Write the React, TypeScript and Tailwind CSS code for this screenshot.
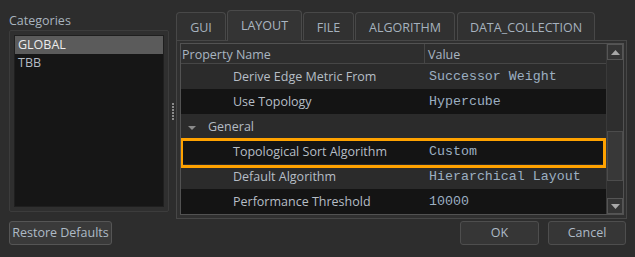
import React from "react";

const rows = [
  { kind: "prop", name: "Derive Edge Metric From", value: "Successor Weight", dark: false },
  { kind: "prop", name: "Use Topology", value: "Hypercube", dark: true },
  { kind: "group", name: "General", value: "", dark: false },
  { kind: "prop", name: "Topological Sort Algorithm", value: "Custom", dark: true, hl: true },
  { kind: "prop", name: "Default Algorithm", value: "Hierarchical Layout", dark: false },
  { kind: "prop", name: "Performance Threshold", value: "10000", dark: true },
];

function Tab({ label, w, selected, ml }: { label: string; w: string; selected?: boolean; ml: string }) {
  if (selected) {
    return (
      <div
        className={`${w} ${ml} h-[31px] -mb-[1px] relative z-10 bg-[#343434] border border-b-0 border-[#4a4a4a] rounded-t-[4px] flex justify-center pt-[6px] text-[#aab6c2]`}
      >
        {label}
      </div>
    );
  }
  return (
    <div
      className={`${w} ${ml} h-[28px] mt-[2px] pt-[3px] bg-[#313131] border border-b-0 border-[#484848] rounded-t-[4px] flex items-center justify-center text-[#a6b2be]`}
    >
      {label}
    </div>
  );
}

export default function App() {
  return (
    <div
      className="w-[635px] h-[257px] bg-[#2d2d2d] flex flex-col overflow-hidden text-[12.5px]"
      style={{ fontFamily: '"Open Sans", "Noto Sans", sans-serif' }}
    >
      <div className="flex h-[212px]">
        {/* Left column */}
        <div className="w-[169px] pl-[9px] pt-[12px] flex flex-col">
          <div className="h-[16px] leading-[16px] pt-[1px] text-[#a9b4bf]">Categories</div>
          <div className="mt-[2px] flex-1 border border-[#3c3c3c] bg-[#2f2f2f] rounded-[2px] p-[4px] flex">
            <div className="flex-1 bg-[#161616] border border-[#1f1f1f] flex flex-col">
              <div className="h-[18px] bg-[#5b5b5b] pl-[3px] pt-[1px] flex items-center text-[#ececec]">GLOBAL</div>
              <div className="h-[18px] pl-[3px] pt-[1px] flex items-center text-[#b4bcc4]">TBB</div>
            </div>
          </div>
        </div>

        {/* Splitter */}
        <div className="w-[7px] pt-[103px] flex flex-col items-center gap-[1px]">
          {[0, 1, 2, 3, 4, 5].map((i) => (
            <div key={i} className="w-[2px] h-[2px] bg-[#8a8a8a]" />
          ))}
        </div>

        {/* Right column */}
        <div className="flex-1 pr-[8px] pt-[10px] flex flex-col">
          <div className="h-[30px] flex items-start">
            <Tab label="GUI" w="w-[50px]" ml="ml-0" />
            <Tab label="LAYOUT" w="w-[75px]" ml="ml-[1px]" selected />
            <Tab label="FILE" w="w-[51px]" ml="ml-[1px]" />
            <Tab label="ALGORITHM" w="w-[100px]" ml="ml-[1px]" />
            <Tab label="DATA_COLLECTION" w="w-[138px]" ml="ml-[2px]" />
          </div>
          <div className="flex-1 border border-[#474747] bg-[#303030] pl-[3px] pt-[2px] pr-[2px] pb-[3px] flex">
            <div className="flex-1 border border-[#525252] flex overflow-hidden">
              {/* table */}
              <div className="w-[425px] flex flex-col overflow-hidden">
                <div className="h-[20px] shrink-0 flex bg-[#2e2e2e] border-b border-[#464646] text-[#a9b5c1]">
                  <div className="w-[244px] pl-[1px] pt-[4px] flex items-center border-r border-[#464646]">Property Name</div>
                  <div className="flex-1 pl-[3px] pt-[4px] flex items-center">Value</div>
                </div>
                {rows.map((r, i) => (
                  <div
                    key={i}
                    className={`h-[25px] shrink-0 flex relative ${r.dark ? "bg-[#141414]" : "bg-[#2b2b2b]"}`}
                  >
                    {r.kind === "group" ? (
                      <div className="flex items-center pt-[2px] text-[#b4bcc4]">
                        <svg width="8" height="4" viewBox="0 0 8 4" className="ml-[7px] mr-[12px] mt-[1px]">
                          <polygon points="0,0 8,0 4,4" fill="#8a8a8a" />
                        </svg>
                        {r.name}
                      </div>
                    ) : (
                      <>
                        <div className="w-[244px] pl-[52px] pt-[2px] flex items-center text-[#b6bec6] whitespace-nowrap">
                          {r.name}
                        </div>
                        <div
                          className="flex-1 pl-[4px] pt-[1px] flex items-center text-[#9cafc2] text-[13.3px] whitespace-nowrap"
                          style={{ fontFamily: '"Liberation Mono", monospace' }}
                        >
                          {r.value}
                        </div>
                      </>
                    )}
                    {r.hl && (
                      <div className="absolute left-[-1px] right-0 top-[-1px] bottom-[-4px] border-[3px] border-[#ffa200] z-10 pointer-events-none" />
                    )}
                  </div>
                ))}
              </div>
              {/* scrollbar */}
              <div className="w-[17px] flex flex-col bg-[#2e2e2e] border-l border-[#3a3a3a]">
                <div className="h-[16px] border border-[#555555] bg-[#343434] flex items-center justify-center">
                  <svg width="9" height="5" viewBox="0 0 9 5">
                    <polygon points="0,5 9,5 4.5,0" fill="#a8a8a8" />
                  </svg>
                </div>
                <div className="flex-1 flex flex-col pt-[71px] pb-[11px]">
                  <div className="h-[50px] border border-[#4c4c4c] bg-[#383838]" />
                </div>
                <div className="h-[16px] border border-[#555555] bg-[#343434] flex items-center justify-center">
                  <svg width="9" height="5" viewBox="0 0 9 5">
                    <polygon points="0,0 9,0 4.5,5" fill="#a8a8a8" />
                  </svg>
                </div>
              </div>
            </div>
          </div>
        </div>
      </div>

      {/* Bottom buttons */}
      <div className="flex pt-[9px] px-[9px]">
        <button className="w-[103px] h-[24px] pt-[1px] bg-[#3a3a3a] border border-[#555555] rounded-[3px] text-[#aebac6]">
          Restore Defaults
        </button>
        <div className="flex-1" />
        <button className="w-[79px] h-[24px] pt-[1px] bg-[#363636] border border-[#4e4e4e] rounded-[3px] text-[#aebac6]">
          OK
        </button>
        <button className="w-[78px] h-[24px] pt-[1px] ml-[9px] bg-[#363636] border border-[#4e4e4e] rounded-[3px] text-[#aebac6]">
          Cancel
        </button>
      </div>
    </div>
  );
}
